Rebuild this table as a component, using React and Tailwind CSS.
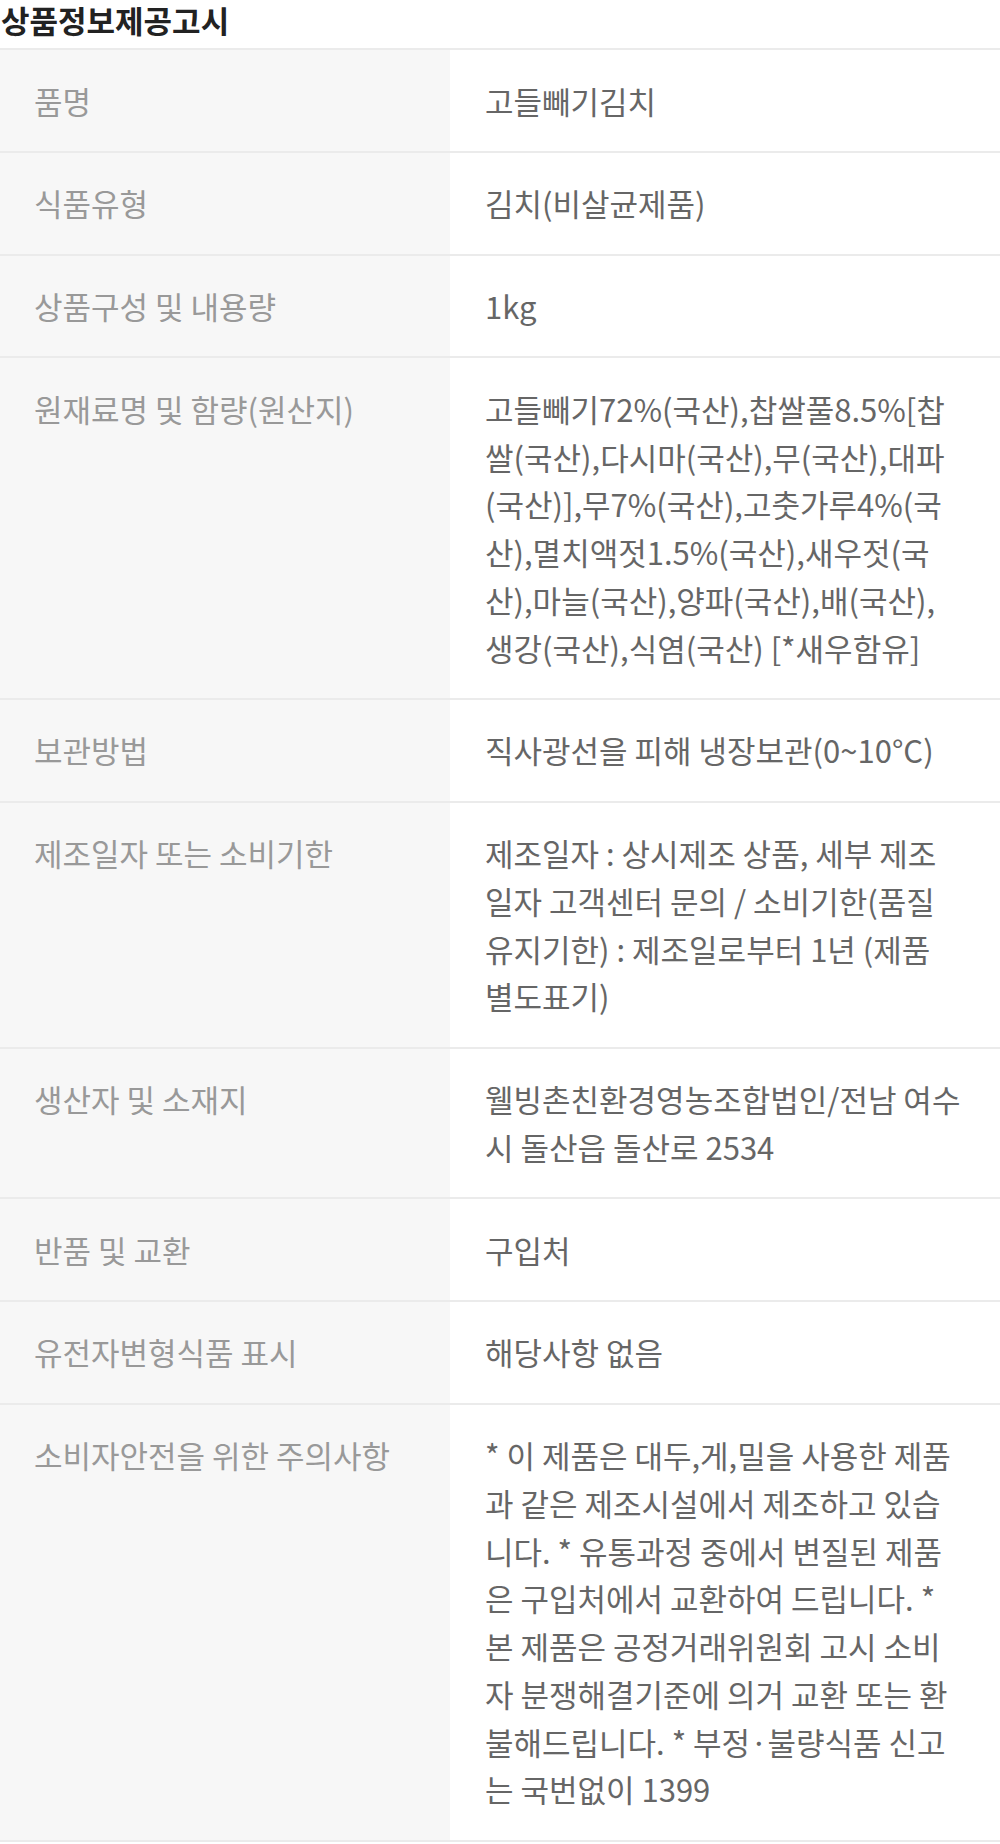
export default function App() {
  // lines are split where the original listing wraps
  const rows = [
    { label: "품명", lines: ["고들빼기김치"] },
    { label: "식품유형", lines: ["김치(비살균제품)"] },
    { label: "상품구성 및 내용량", lines: ["1kg"] },
    {
      label: "원재료명 및 함량(원산지)",
      lines: [
        "고들빼기72%(국산),찹쌀풀8.5%[찹",
        "쌀(국산),다시마(국산),무(국산),대파",
        "(국산)],무7%(국산),고춧가루4%(국",
        "산),멸치액젓1.5%(국산),새우젓(국",
        "산),마늘(국산),양파(국산),배(국산),",
        "생강(국산),식염(국산) [*새우함유]",
      ],
    },
    { label: "보관방법", lines: ["직사광선을 피해 냉장보관(0~10°C)"] },
    {
      label: "제조일자 또는 소비기한",
      lines: [
        "제조일자 : 상시제조 상품, 세부 제조",
        "일자 고객센터 문의 / 소비기한(품질",
        "유지기한) : 제조일로부터 1년 (제품",
        "별도표기)",
      ],
    },
    { label: "생산자 및 소재지", lines: ["웰빙촌친환경영농조합법인/전남 여수", "시 돌산읍 돌산로 2534"] },
    { label: "반품 및 교환", lines: ["구입처"] },
    { label: "유전자변형식품 표시", lines: ["해당사항 없음"] },
    {
      label: "소비자안전을 위한 주의사항",
      lines: [
        "* 이 제품은 대두,게,밀을 사용한 제품",
        "과 같은 제조시설에서 제조하고 있습",
        "니다. * 유통과정 중에서 변질된 제품",
        "은 구입처에서 교환하여 드립니다. *",
        "본 제품은 공정거래위원회 고시 소비",
        "자 분쟁해결기준에 의거 교환 또는 환",
        "불해드립니다. * 부정·불량식품 신고",
        "는 국번없이 1399",
      ],
    },
  ];

  return (
    <div className="w-[1000px] bg-white font-['Noto_Sans_CJK_KR','Noto_Sans',sans-serif]">
      <h2 className="pl-[1px] pb-[8px] text-[31px] leading-[40px] font-bold text-[#222]">상품정보제공고시</h2>
      <div className="border-t-2 border-[#ebebeb]">
        {rows.map((row, idx) => (
          <div key={idx} className="grid grid-cols-[450px_1fr] border-b-2 border-[#ebebeb]">
            <div className="bg-[#f7f7f7] px-[34px] py-[26.5px] text-[31px] leading-[47.75px] text-[#999]">{row.label}</div>
            <div className="pl-[35px] pr-[20px] py-[26.5px] text-[31px] leading-[47.75px] text-[#666]">
              {row.lines.map((line, i) => (
                <div key={i} className="whitespace-nowrap">{line}</div>
              ))}
            </div>
          </div>
        ))}
      </div>
    </div>
  );
}
